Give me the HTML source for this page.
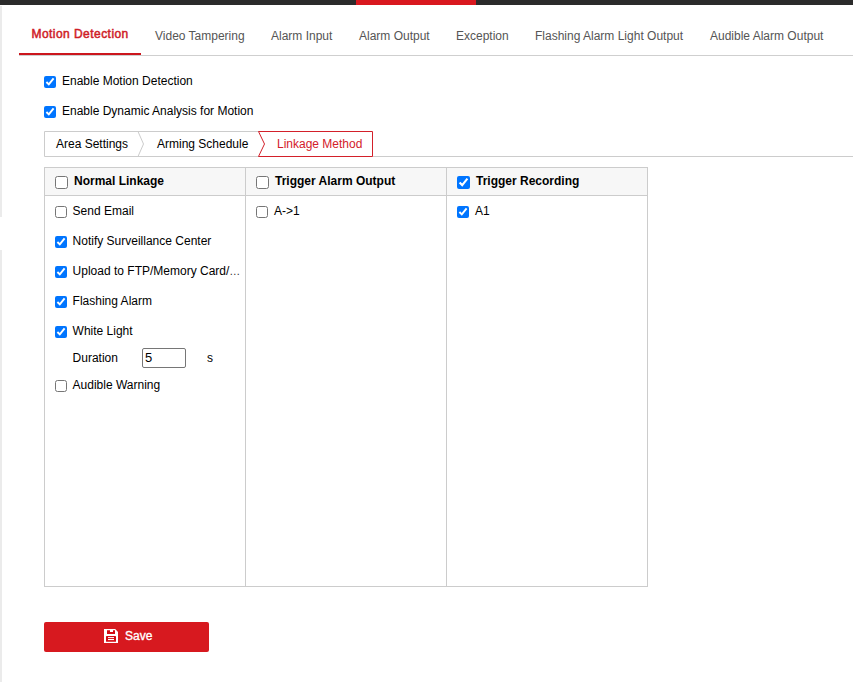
<!DOCTYPE html>
<html>
<head>
<meta charset="utf-8">
<style>
html,body{margin:0;padding:0;}
body{width:853px;height:682px;overflow:hidden;position:relative;background:#fff;font-family:"Liberation Sans",sans-serif;font-size:12px;color:#000;}
.a{position:absolute;white-space:nowrap;line-height:14px;}
#topbar{position:absolute;left:0;top:0;width:853px;height:5px;background:#2b2b2b;}
#topred{position:absolute;left:356px;top:0;width:120px;height:5px;background:#d9181f;}
.strip{position:absolute;left:0;width:2px;background:#ebebeb;}
.tab{color:#555;}
.tabact{color:#cf1d27;-webkit-text-stroke:0.5px #cf1d27;letter-spacing:0.45px;}
#tabline{position:absolute;left:19px;top:55px;width:834px;height:1px;background:#cfcfcf;}
#tabred{position:absolute;left:19px;top:53px;width:122px;height:2px;background:#cc161d;}
input[type=checkbox]{position:absolute;margin:0;width:13px;height:13px;}
.bc{position:absolute;top:131px;height:26px;}
.hdr{position:absolute;left:44px;top:167px;width:603px;height:28px;background:#f7f7f7;}
.hl{position:absolute;background:#cccccc;}
.b{font-weight:bold;}
#dur{position:absolute;left:142px;top:348px;width:44px;height:20px;box-sizing:border-box;border:1px solid #767676;border-radius:2px;}
#save{position:absolute;left:44px;top:622px;width:165px;height:30px;background:#d7191f;border-radius:2px;}
</style>
</head>
<body>
<div id="topbar"></div><div id="topred"></div>
<div class="strip" style="top:6px;height:211px"></div>
<div class="strip" style="top:250px;height:432px"></div>

<!-- tabs -->
<div id="tabline"></div><div id="tabred"></div>
<div class="a tabact" style="left:31.5px;top:27px">Motion Detection</div>
<div class="a tab" style="left:155px;top:29px">Video Tampering</div>
<div class="a tab" style="left:271px;top:29px">Alarm Input</div>
<div class="a tab" style="left:359px;top:29px">Alarm Output</div>
<div class="a tab" style="left:456px;top:29px">Exception</div>
<div class="a tab" style="left:535px;top:29px">Flashing Alarm Light Output</div>
<div class="a tab" style="left:710px;top:29px">Audible Alarm Output</div>

<!-- enable rows -->
<input type="checkbox" checked style="width:12px;height:12px;left:44px;top:76px">
<div class="a" style="left:62px;top:74px">Enable Motion Detection</div>
<input type="checkbox" checked style="width:12px;height:12px;left:44px;top:106px">
<div class="a" style="left:62px;top:104px">Enable Dynamic Analysis for Motion</div>

<!-- breadcrumb -->
<svg style="position:absolute;left:0;top:0" width="853" height="170">
  <path d="M44.5 156.5 V131.5 H259 M44.5 156.5 H259" fill="none" stroke="#cccccc" stroke-width="1"/>
  <path d="M138 131.5 L143.5 144 L138 156.5" fill="none" stroke="#cccccc" stroke-width="1"/>
  <path d="M372.5 156.5 H853" fill="none" stroke="#cccccc" stroke-width="1"/>
  <path d="M258.5 131.5 H372.5 V156.5 H258.5 L264.5 144 Z" fill="none" stroke="#d3202a" stroke-width="1"/>
</svg>
<div class="a" style="left:56px;top:137px">Area Settings</div>
<div class="a" style="left:157px;top:137px">Arming Schedule</div>
<div class="a" style="left:277px;top:137px;color:#d3202a">Linkage Method</div>

<!-- table -->
<div class="hdr"></div>
<div class="hl" style="left:44px;top:167px;width:604px;height:1px"></div>
<div class="hl" style="left:44px;top:195px;width:604px;height:1px"></div>
<div class="hl" style="left:44px;top:586px;width:604px;height:1px"></div>
<div class="hl" style="left:44px;top:167px;width:1px;height:420px"></div>
<div class="hl" style="left:245px;top:167px;width:1px;height:420px"></div>
<div class="hl" style="left:446px;top:167px;width:1px;height:420px"></div>
<div class="hl" style="left:647px;top:167px;width:1px;height:420px"></div>

<input type="checkbox" style="left:55px;top:176px">
<div class="a b" style="left:74px;top:174px">Normal Linkage</div>
<input type="checkbox" style="left:256px;top:176px">
<div class="a b" style="left:275px;top:174px">Trigger Alarm Output</div>
<input type="checkbox" checked style="left:457px;top:176px">
<div class="a b" style="left:476px;top:174px">Trigger Recording</div>

<input type="checkbox" style="width:12px;height:12px;left:55px;top:206px">
<div class="a" style="left:72.6px;top:204px">Send Email</div>
<input type="checkbox" checked style="width:12px;height:12px;left:55px;top:236px">
<div class="a" style="left:72.6px;top:234px">Notify Surveillance Center</div>
<input type="checkbox" checked style="width:12px;height:12px;left:55px;top:266px">
<div class="a" style="left:72.6px;top:264px">Upload to FTP/Memory Card/<span style="font-size:11px;color:#333">&#8230;</span></div>
<input type="checkbox" checked style="width:12px;height:12px;left:55px;top:296px">
<div class="a" style="left:72.6px;top:294px">Flashing Alarm</div>
<input type="checkbox" checked style="width:12px;height:12px;left:55px;top:326px">
<div class="a" style="left:72.6px;top:324px">White Light</div>
<div class="a" style="left:72.6px;top:351px">Duration</div>
<div id="dur"></div>
<div class="a" style="left:145px;top:351px;font-size:13px">5</div>
<div class="a" style="left:207px;top:351px">s</div>
<input type="checkbox" style="width:12px;height:12px;left:55px;top:380px">
<div class="a" style="left:72.6px;top:378px">Audible Warning</div>

<input type="checkbox" style="width:12px;height:12px;left:256px;top:206px">
<div class="a" style="left:274px;top:204px">A-&gt;1</div>
<input type="checkbox" checked style="width:12px;height:12px;left:457px;top:206px">
<div class="a" style="left:475px;top:204px">A1</div>

<!-- save -->
<div id="save">
<svg style="position:absolute;left:0;top:0" width="165" height="30">
  <path d="M60 7 H71.2 L74 10 V21 H60 Z" fill="#fff"/>
  <path d="M63 8.2 H66 V9.9 H69 V8.2 H71 V12 H63 Z" fill="#d40a14"/>
  <rect x="62" y="14" width="10" height="5.8" rx="0.6" fill="#d40a14"/>
  <rect x="64" y="15.1" width="6" height="1" fill="#fff"/>
  <rect x="64" y="17" width="6" height="1.1" fill="#fff"/>
</svg>
<div class="a" style="left:81px;top:7px;color:#fff;-webkit-text-stroke:0.35px #fff">Save</div>
</div>
</body>
</html>
